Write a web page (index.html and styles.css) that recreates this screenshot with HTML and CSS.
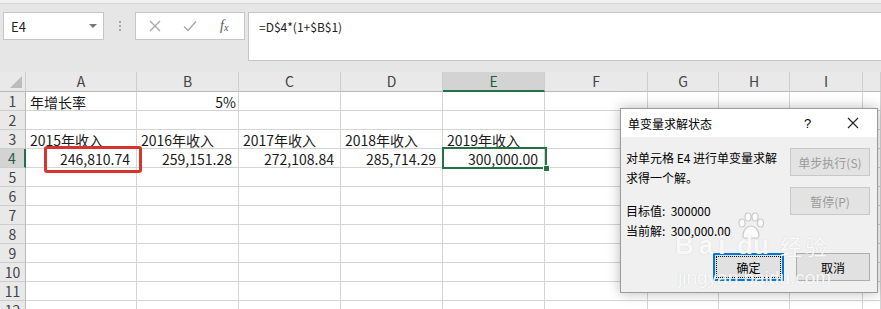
FILE: index.html
```html
<!DOCTYPE html>
<html lang="zh-cn">
<head>
    <meta charset="utf-8">
    <title>单变量求解状态</title>
    <link rel="stylesheet" href="styles.css">
</head>
<body>
<div class="app">
    <div class="edge"></div>

    <div class="formula-row">
        <div class="namebox">
            <span>E4</span>
            <span class="caret"></span>
        </div>
        <div class="grip"><i></i><i></i><i></i></div>
        <div class="fxbox">
            <svg class="ico" width="12" height="12" viewBox="0 0 12 12"><path d="M1 1L11 11M11 1L1 11" stroke="#a6a6a6" stroke-width="1.3" fill="none"/></svg>
            <svg class="ico" width="14" height="12" viewBox="0 0 14 12"><path d="M1 6.5L5 10.5L13 1.5" stroke="#a6a6a6" stroke-width="1.4" fill="none"/></svg>
            <span class="fx">f<sub>x</sub></span>
        </div>
        <div class="formula">=D$4*(1+$B$1)</div>
    </div>

    <div class="sheet">
        <!-- column headers -->
        <div class="hd corner"><span class="tri"></span></div>
        <div class="hd">A</div>
        <div class="hd">B</div>
        <div class="hd">C</div>
        <div class="hd">D</div>
        <div class="hd sel-col">E</div>
        <div class="hd">F</div>
        <div class="hd">G</div>
        <div class="hd">H</div>
        <div class="hd">I</div>
        <div class="hd"></div>

        <!-- row 1 -->
        <div class="rh">1</div>
        <div class="c">年增长率</div>
        <div class="c num pct">5%</div>
        <div class="c"></div><div class="c"></div><div class="c"></div><div class="c"></div><div class="c"></div><div class="c"></div><div class="c"></div><div class="c"></div>

        <!-- row 2 -->
        <div class="rh">2</div>
        <div class="c"></div><div class="c"></div><div class="c"></div><div class="c"></div><div class="c"></div><div class="c"></div><div class="c"></div><div class="c"></div><div class="c"></div><div class="c"></div>

        <!-- row 3 -->
        <div class="rh">3</div>
        <div class="c">2015年收入</div>
        <div class="c">2016年收入</div>
        <div class="c">2017年收入</div>
        <div class="c">2018年收入</div>
        <div class="c">2019年收入</div>
        <div class="c"></div><div class="c"></div><div class="c"></div><div class="c"></div><div class="c"></div>

        <!-- row 4 -->
        <div class="rh sel-row">4</div>
        <div class="c num">246,810.74</div>
        <div class="c num">259,151.28</div>
        <div class="c num">272,108.84</div>
        <div class="c num">285,714.29</div>
        <div class="c num">300,000.00</div>
        <div class="c"></div><div class="c"></div><div class="c"></div><div class="c"></div><div class="c"></div>

        <div class="rh">5</div>
        <div class="c"></div><div class="c"></div><div class="c"></div><div class="c"></div><div class="c"></div><div class="c"></div><div class="c"></div><div class="c"></div><div class="c"></div><div class="c"></div>
        <div class="rh">6</div>
        <div class="c"></div><div class="c"></div><div class="c"></div><div class="c"></div><div class="c"></div><div class="c"></div><div class="c"></div><div class="c"></div><div class="c"></div><div class="c"></div>
        <div class="rh">7</div>
        <div class="c"></div><div class="c"></div><div class="c"></div><div class="c"></div><div class="c"></div><div class="c"></div><div class="c"></div><div class="c"></div><div class="c"></div><div class="c"></div>
        <div class="rh">8</div>
        <div class="c"></div><div class="c"></div><div class="c"></div><div class="c"></div><div class="c"></div><div class="c"></div><div class="c"></div><div class="c"></div><div class="c"></div><div class="c"></div>
        <div class="rh">9</div>
        <div class="c"></div><div class="c"></div><div class="c"></div><div class="c"></div><div class="c"></div><div class="c"></div><div class="c"></div><div class="c"></div><div class="c"></div><div class="c"></div>
        <div class="rh">10</div>
        <div class="c"></div><div class="c"></div><div class="c"></div><div class="c"></div><div class="c"></div><div class="c"></div><div class="c"></div><div class="c"></div><div class="c"></div><div class="c"></div>
        <div class="rh">11</div>
        <div class="c"></div><div class="c"></div><div class="c"></div><div class="c"></div><div class="c"></div><div class="c"></div><div class="c"></div><div class="c"></div><div class="c"></div><div class="c"></div>
        <div class="rh">12</div>
        <div class="c"></div><div class="c"></div><div class="c"></div><div class="c"></div><div class="c"></div><div class="c"></div><div class="c"></div><div class="c"></div><div class="c"></div><div class="c"></div>
    </div>

    <!-- overlays on the grid -->
    <div class="mark-a4"></div>
    <div class="cursor-e4"><span class="handle"></span></div>

    <div class="dialog">
        <div class="dlg-title">
            <span class="dlg-name">单变量求解状态</span>
            <span class="dlg-help">?</span>
            <svg class="dlg-close" width="12" height="12" viewBox="0 0 12 12"><path d="M1 1L11 11M11 1L1 11" stroke="#222" stroke-width="1.1" fill="none"/></svg>
        </div>
        <div class="dlg-body">
            <div class="dlg-main">
                <div class="dlg-text">
                    <p>对单元格 E4 进行单变量求解</p>
                    <p>求得一个解。</p>
                    <p class="gap">目标值:&nbsp; 300000</p>
                    <p>当前解:&nbsp; 300,000.00</p>
                </div>
                <div class="dlg-side">
                    <button class="btn" disabled>单步执行(S)</button>
                    <button class="btn" disabled>暂停(P)</button>
                </div>
            </div>
            <div class="dlg-foot">
                <button class="btn btn-ok"><span>确定</span></button>
                <button class="btn btn-cancel">取消</button>
            </div>
        </div>
    </div>

    <!-- watermark -->
    <div class="wm">
        <svg class="wm-paw" width="28" height="28" viewBox="0 0 28 28">
            <g fill="rgba(255,255,255,.7)" stroke="rgba(175,175,175,.6)" stroke-width="1.2">
                <ellipse cx="5" cy="11" rx="3" ry="4"/>
                <ellipse cx="11" cy="5" rx="3" ry="4"/>
                <ellipse cx="18" cy="5" rx="3" ry="4"/>
                <ellipse cx="23.5" cy="11" rx="3" ry="4"/>
                <path d="M6 24C6 18 10 14 14 14S22 18 22 24C22 27 18 26 14 26S6 27 6 24Z"/>
            </g>
        </svg>
        <span class="wm-bai">Bai</span>
        <span class="wm-du">du</span>
        <span class="wm-jy">经验</span>
        <span class="wm-url">jingyan.baidu.com</span>
    </div>
</div>
</body>
</html>
```

FILE: styles.css
```css
* {
    box-sizing: border-box;
}
body {
    margin: 0;
    background: #fff;
    font-family: "Noto Sans CJK SC", "Noto Sans", sans-serif;
    overflow: hidden;
}
.app {
    position: relative;
    width: 881px;
    height: 309px;
    background: #e6e6e6;
    overflow: hidden;
}

/* formula bar */
.edge {
    height: 4px;
    background: #f1f1f1;
    border-bottom: 1px solid #d6d6d6;
}
.formula-row {
    display: flex;
    align-items: flex-start;
    height: 68px;
    padding-top: 8px;
    padding-left: 3px;
}
.namebox {
    display: flex;
    align-items: center;
    justify-content: space-between;
    width: 101px;
    height: 28px;
    padding: 0 6px 0 7px;
    background: #fff;
    border: 1px solid #c6c6c6;
    font-size: 13px;
    color: #222;
}
.caret {
    width: 0;
    height: 0;
    border-left: 4px solid transparent;
    border-right: 4px solid transparent;
    border-top: 4px solid #777;
}
.grip {
    display: flex;
    flex-direction: column;
    align-items: center;
    justify-content: center;
    gap: 2px;
    width: 31px;
    height: 28px;
}
.grip i {
    width: 2px;
    height: 2px;
    background: #a8a8a8;
}
.fxbox {
    display: flex;
    align-items: center;
    width: 110px;
    height: 28px;
    padding-left: 13px;
    background: #fff;
    border: 1px solid #c6c6c6;
}
.fxbox .ico:first-child {
    margin-right: 22px;
}
.fxbox .ico + .ico {
    margin-right: 23px;
}
.fx {
    font-family: "Liberation Serif", serif;
    font-style: italic;
    font-size: 14px;
    color: #555;
}
.fx sub {
    font-size: 10px;
    vertical-align: -1px;
}
.formula {
    flex: 1;
    height: 49px;
    margin-left: 3px;
    margin-right: -2px;
    padding: 5px 10px;
    background: #fff;
    border: 1px solid #c6c6c6;
    font-size: 12px;
    line-height: 18px;
    color: #222;
}

/* grid */
.sheet {
    display: grid;
    grid-template-columns: 26px 111px 102px 102px 102px 102px 103px 71px 71px 73px 1fr;
    grid-template-rows: 20px;
    grid-auto-rows: 19px;
    background: #fff;
}
.hd {
    position: relative;
    background: #e9e9e9;
    border-right: 1px solid #cdcdcd;
    border-bottom: 1px solid #b9b9b9;
    text-align: center;
    font-size: 14px;
    line-height: 19px;
    color: #444;
}
.hd.sel-col {
    background: #d3d3d3;
    border-bottom: 2px solid #217346;
    color: #1e5e3a;
}
.corner .tri {
    position: absolute;
    right: 3px;
    bottom: 3px;
    width: 0;
    height: 0;
    border-left: 12px solid transparent;
    border-bottom: 12px solid #bcbcbc;
}
.rh {
    background: #e9e9e9;
    border-right: 1px solid #b9b9b9;
    border-bottom: 1px solid #cdcdcd;
    text-align: center;
    font-size: 14px;
    line-height: 19px;
    color: #444;
}
.rh.sel-row {
    background: #d3d3d3;
    border-right: 2px solid #217346;
    color: #1e5e3a;
}
.c {
    border-right: 1px solid #d4d4d4;
    border-bottom: 1px solid #d4d4d4;
    padding: 0 3px 0 4px;
    font-size: 14px;
    line-height: 20px;
    color: #1a1a1a;
    white-space: nowrap;
    overflow: visible;
}
.c.num {
    text-align: right;
    padding-right: 6px;
}
.c.pct {
    padding-right: 2px;
}

.mark-a4 {
    position: absolute;
    left: 44px;
    top: 146px;
    width: 98px;
    height: 27px;
    border: 3px solid #d7352c;
    border-radius: 3px;
}
.cursor-e4 {
    position: absolute;
    left: 442px;
    top: 147px;
    width: 105px;
    height: 22px;
    border: 2px solid #217346;
}
.cursor-e4 .handle {
    position: absolute;
    right: -5px;
    bottom: -5px;
    width: 7px;
    height: 7px;
    background: #217346;
    border: 1px solid #fff;
}

/* dialog */
.dialog {
    position: absolute;
    left: 620px;
    top: 108px;
    width: 258px;
    height: 185px;
    background: #f0f0f0;
    border: 1px solid #9a9a9a;
    box-shadow: 0 0 12px rgba(0, 0, 0, 0.28);
    font-size: 12px;
    color: #000;
}
.dlg-title {
    display: flex;
    align-items: center;
    height: 28px;
    padding: 0 0 0 7px;
    background: #fff;
}
.dlg-name {
    flex: 1;
}
.dlg-help {
    width: 12px;
    margin-right: 31px;
    font-family: "Liberation Sans", sans-serif;
    font-size: 13px;
}
.dlg-close {
    margin-right: 18px;
}
.dlg-body {
    padding: 11px 7px 0 5px;
}
.dlg-main {
    display: flex;
    justify-content: space-between;
    align-items: flex-start;
}
.dlg-text p {
    margin: 0;
    line-height: 20px;
}
.dlg-text p.gap {
    margin-top: 13px;
}
.dlg-side {
    display: flex;
    flex-direction: column;
    gap: 11px;
}
.btn {
    height: 28px;
    padding: 0;
    background: #e1e1e1;
    border: 1px solid #adadad;
    font-family: inherit;
    font-size: 12px;
    color: #000;
}
.btn:disabled {
    width: 80px;
    background: #e3e3e3;
    border-color: #c8c8c8;
    color: #9a9a9a;
}
.dlg-foot {
    display: flex;
    justify-content: flex-end;
    gap: 12px;
    margin-top: 12px;
}
.btn-ok {
    width: 71px;
    padding: 2px;
    border: 1px solid #0078d7;
    box-shadow: inset 0 0 0 1px #0078d7;
}
.btn-ok span {
    display: flex;
    align-items: center;
    justify-content: center;
    height: 100%;
    border: 1px dotted #111;
}
.btn-cancel {
    width: 74px;
}

/* watermark */
.wm {
    position: absolute;
    left: 0;
    top: 0;
    width: 881px;
    height: 309px;
    pointer-events: none;
    color: rgba(255, 255, 255, 0.9);
    text-shadow: 0 0 1px rgba(170, 170, 170, 0.5);
    font-family: "Liberation Sans", sans-serif;
}
.wm span, .wm svg {
    position: absolute;
}
.wm-paw {
    left: 737px;
    top: 212px;
}
.wm-bai {
    left: 675px;
    top: 232px;
    font-size: 26px;
    font-weight: bold;
    line-height: 26px;
    letter-spacing: 5px;
}
.wm-du {
    left: 737px;
    top: 232px;
    font-size: 26px;
    font-weight: bold;
    line-height: 26px;
}
.wm-jy {
    left: 780px;
    top: 233px;
    font-family: "Noto Sans CJK SC", sans-serif;
    font-size: 22px;
    line-height: 24px;
    letter-spacing: 3px;
}
.wm-url {
    left: 678px;
    top: 268px;
    font-size: 19px;
    line-height: 20px;
}
```
